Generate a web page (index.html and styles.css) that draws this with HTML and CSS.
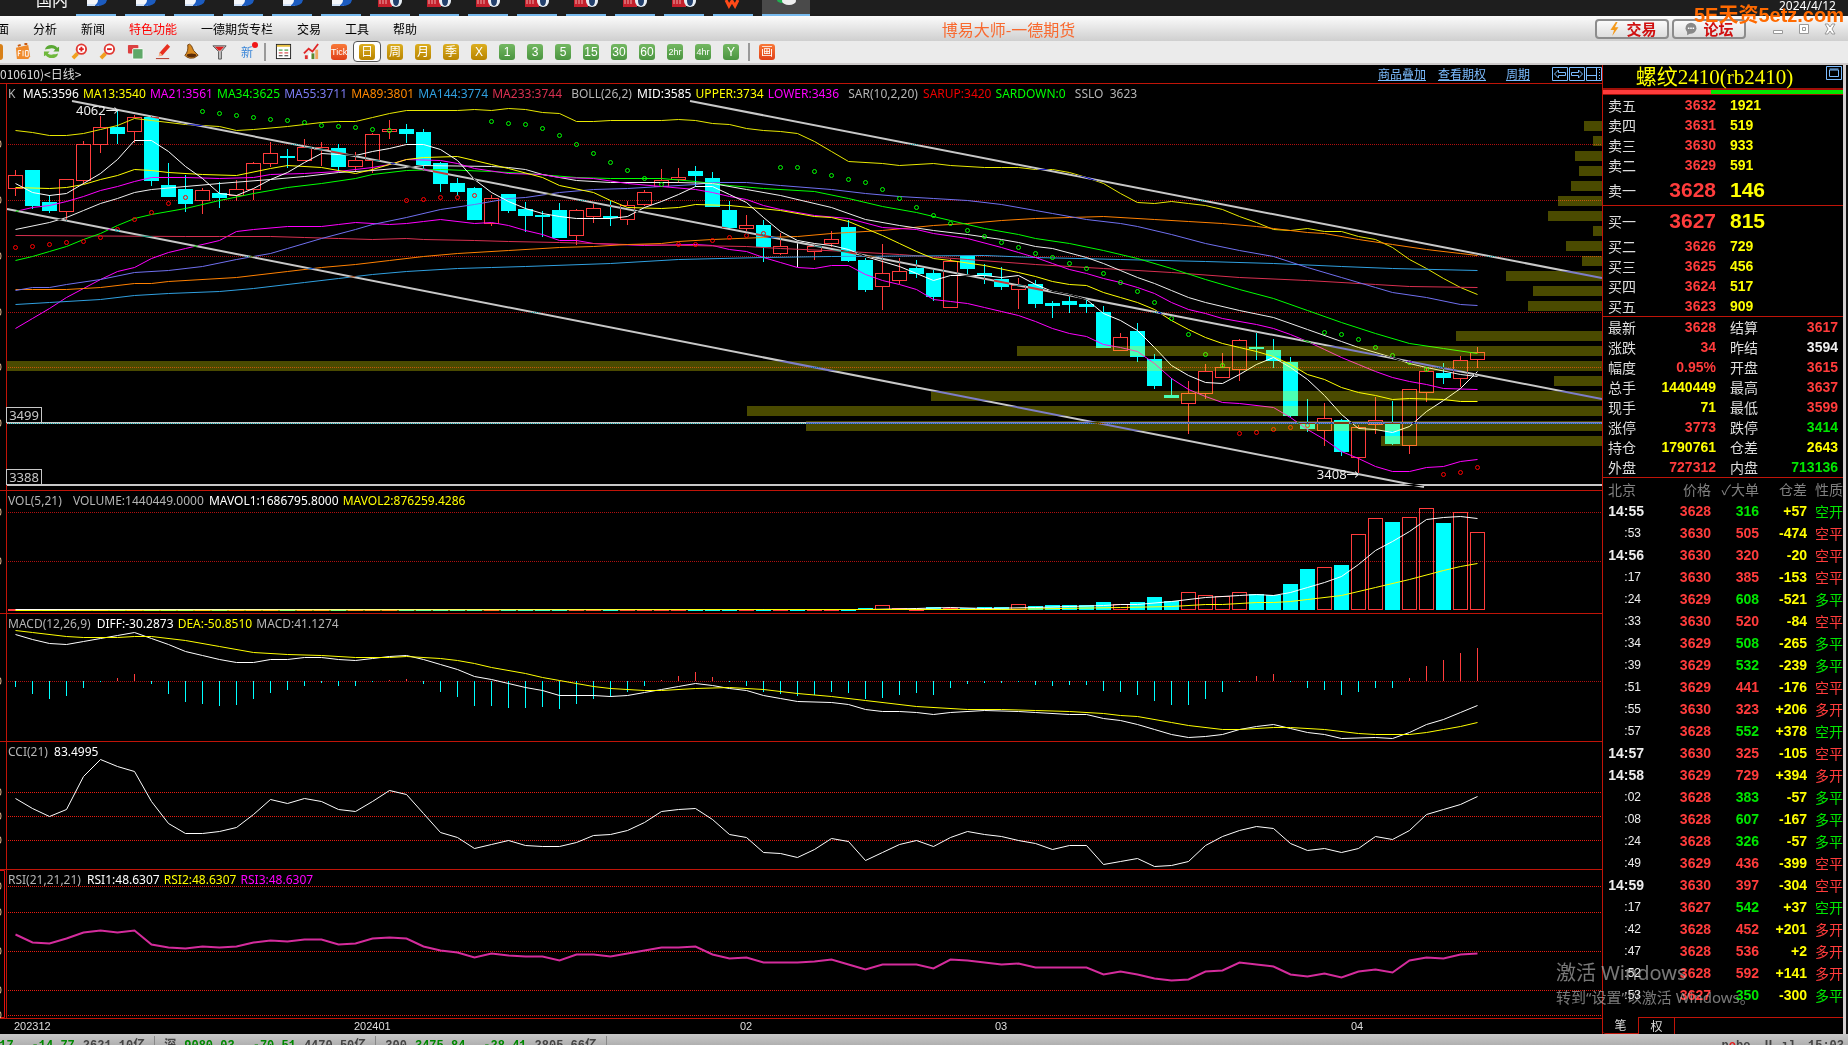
FILE: index.html
```html
<!DOCTYPE html>
<html lang="zh-CN">
<head>
<meta charset="utf-8">
<title>博易大师-一德期货</title>
<link rel="stylesheet" href="styles.css">
</head>
<body>
<svg class="defs" aria-hidden="true">
  <symbol id="t-doc" viewBox="0 0 24 10"><path d="M3 0h12v6H3z" fill="#f4f6fa"/><path d="M14 0h9q-1 6-11 6h-3q5-2 5-6z" fill="#1c5cc0"/><path d="M3 4h8v2H3z" fill="#cfe0f5"/></symbol>
  <symbol id="t-red" viewBox="0 0 24 10"><path d="M0 0h14v7H0z" fill="#c4202c"/><path d="M2 0v4M5 0v4M8 0v4" stroke="#eaa"/><circle cx="18" cy="1" r="6" fill="#e8eef4"/><ellipse cx="18" cy="1" rx="3" ry="5" fill="#23406c"/></symbol>
  <symbol id="t-w" viewBox="0 0 24 10"><path d="M5 0l3 6 3-5 3 5 3-6" fill="none" stroke="#ff4a18" stroke-width="3"/></symbol>
  <symbol id="t-chat" viewBox="0 0 24 10"><ellipse cx="8" cy="0" rx="5" ry="3" fill="#20b050"/><ellipse cx="15" cy="1" rx="7" ry="4" fill="#eee"/></symbol>
</svg>

<header class="taskbar">
  <span class="task-label">国内</span>
  <nav class="tasks" id="tasks"></nav>
  <time class="date">2024/4/12</time>
</header>

<div class="menubar">
  <nav class="menus">
    <a href="#">面</a><a href="#">分析</a><a href="#">新闻</a><a href="#" class="hot">特色功能</a><a href="#">一德期货专栏</a><a href="#">交易</a><a href="#">工具</a><a href="#">帮助</a>
  </nav>
  <h1>博易大师-一德期货</h1>
  <div class="quick">
    <button type="button"><svg viewBox="0 0 12 18"><path d="M8 1L2 10h4l-2 7 7-10H7l3-6z" fill="#f49a1c"/></svg>交易</button>
    <button type="button"><svg viewBox="0 0 18 18"><circle cx="9" cy="8" r="7" fill="#888"/><path d="M4 12v5l5-3z" fill="#888"/><path d="M5 8h2m1 0h2m1 0h2" stroke="#fff" stroke-width="2"/></svg>论坛</button>
  </div>
  <div class="win">
    <button type="button" aria-label="最小化"><svg viewBox="0 0 12 12"><path d="M1.500 7.500h9v3h-9z"/></svg></button>
    <button type="button" aria-label="还原"><svg viewBox="0 0 12 12"><path d="M1.500 1.500h9v9h-9zM4.500 4.500h3v3h-3z"/></svg></button>
    <button type="button" aria-label="关闭"><svg viewBox="0 0 12 12"><path d="M1 1h3l2 3 2-3h3L8 6l3 5H8L6 8l-2 3H1l3-5z"/></svg></button>
  </div>
  <strong class="brand">5E天资5etz.com</strong>
</div>

<div class="toolbar">
  <button type="button" aria-label="报价"><i class="k orange"></i></button>
  <button type="button" aria-label="F10"><svg viewBox="0 0 18 18"><path d="M1 5l13-3 2 12-2 3H2z" fill="#f08a2a"/><path d="M3 3l3-1M10 1l3 0" stroke="#c85a10" stroke-width="2"/><path d="M3.500 14V8h3M3.500 11h2M8.500 8v6M11 8h3v6h-3z" stroke="#fff" fill="none"/></svg></button>
  <button type="button" aria-label="刷新"><svg viewBox="0 0 18 18"><path d="M2 7q1-5 7-5 4 0 6 3l2-1v5h-6l2-2q-3-2-6-1-2 0-5 1z" fill="#5aa834"/><path d="M16 11q-1 5-7 5-4 0-6-3l-2 1V9h6l-2 2q3 2 6 1 2 0 5-1z" fill="#6fb83c"/></svg></button>
  <button type="button" aria-label="放大"><svg viewBox="0 0 18 18"><path d="M7 11l-5 5" stroke="#f0a020" stroke-width="4"/><circle cx="11" cy="6.500" r="5" fill="#fff" stroke="#e03a34" stroke-width="2"/><path d="M8.500 6.500h5M11 4v5" stroke="#e02020" stroke-width="2"/></svg></button>
  <button type="button" aria-label="缩小"><svg viewBox="0 0 18 18"><path d="M7 11l-5 5" stroke="#f0a020" stroke-width="4"/><circle cx="11" cy="6.500" r="5" fill="#fff" stroke="#e03a34" stroke-width="2"/><path d="M8.500 6.500h5" stroke="#e02020" stroke-width="2"/></svg></button>
  <button type="button" aria-label="叠加"><svg viewBox="0 0 18 18"><rect x="1" y="2" width="11" height="9" rx="1" fill="#dc4040"/><rect x="6" y="6" width="11" height="11" rx="1" fill="#5fa868" stroke="#fff"/></svg></button>
  <button type="button" aria-label="画线"><svg viewBox="0 0 18 18"><path d="M13 1l3 3-8 9-4 1 1-4z" fill="#e83020"/><path d="M5 10l3 3-4 1z" fill="#f8c090"/><path d="M1 16.500h14" stroke="#b03020"/></svg></button>
  <button type="button" aria-label="预警"><svg viewBox="0 0 18 18"><path d="M5 2q2-2 4 1 1 5 7 10-4 4-9 3-4-1-5-3 4-4 3-11z" fill="#d88a20" stroke="#704010"/><ellipse cx="9" cy="13" rx="5" ry="2" fill="#5a2c08"/></svg></button>
  <button type="button" aria-label="筛选"><svg viewBox="0 0 18 18"><path d="M2 3h14l-5 6v8H8V9z" fill="#c8c8c8" stroke="#555"/><path d="M4 4h10l-4 4H8z" fill="#e02020"/></svg></button>
  <button type="button" class="new">新</button>
  <span class="sep"></span>
  <button type="button" aria-label="列表"><svg viewBox="0 0 18 18"><rect x="1.500" y="1.500" width="15" height="15" fill="#fff" stroke="#222"/><path d="M2 3h14" stroke="#e8c040" stroke-width="2"/><path d="M4 7.500h4m2 0h4" stroke="#181"/><path d="M4 10.500h4m2 0h4" stroke="#c22"/><path d="M4 13.500h4m2 0h4" stroke="#222"/></svg></button>
  <button type="button" aria-label="走势"><svg viewBox="0 0 18 18"><path d="M1 11l5-5 4 3 6-8" stroke="#e02828" stroke-width="2" fill="none"/><path d="M2 13h3v4H2z" fill="#e03030"/><path d="M6 11h3v6H6z" fill="#fff"/><path d="M9 11h3v6H9z" fill="#5a8a30"/><path d="M13 7h3v10h-3z" fill="#f0a860"/></svg></button>
  <button type="button"><i class="k red">Tick</i></button>
  <button type="button" class="on"><i class="k gold">日</i></button>
  <button type="button"><i class="k gold">周</i></button>
  <button type="button"><i class="k gold">月</i></button>
  <button type="button"><i class="k gold">季</i></button>
  <button type="button"><i class="k gold">X</i></button>
  <button type="button"><i class="k green">1</i></button>
  <button type="button"><i class="k green">3</i></button>
  <button type="button"><i class="k green">5</i></button>
  <button type="button"><i class="k green">15</i></button>
  <button type="button"><i class="k green">30</i></button>
  <button type="button"><i class="k green">60</i></button>
  <button type="button"><i class="k green s">2hr</i></button>
  <button type="button"><i class="k green s">4hr</i></button>
  <button type="button"><i class="k green">Y</i></button>
  <span class="sep"></span>
  <button type="button"><i class="k red b">画</i></button>
</div>

<main class="work">
  <section class="charts">
    <div class="caption">
      <span>010610)&lt;日线&gt;</span>
      <nav><a href="#">商品叠加</a><a href="#">查看期权</a><a href="#">周期</a></nav>
      <div class="arrows">
        <button type="button" aria-label="左移"><svg viewBox="0 0 16 14"><path d="M.5.5h15v13H.5zM2.500 7l4-4v2.500h7v3h-7V11z"/></svg></button>
        <button type="button" aria-label="右移"><svg viewBox="0 0 16 14"><path d="M.5.5h15v13H.5zM13.500 7l-4-4v2.500h-7v3h7V11z"/></svg></button>
        <button type="button" aria-label="边栏"><svg viewBox="0 0 16 14"><path d="M.5.5h15v13H.5zM.5 8.500h10M10.500 1v12M13 2.500h1m-1 3h1m-1 3h1m-1 3h1"/></svg></button>
      </div>
    </div>
    <div class="panels">
      <div class="panel" id="main">
        <p class="legend">K&nbsp; <b class="w">MA5:3596</b> <b class="y">MA13:3540</b> <b class="m">MA21:3561</b> <b class="g">MA34:3625</b> <b class="v">MA55:3711</b> <b class="o">MA89:3801</b> <b class="c">MA144:3774</b> <b class="p">MA233:3744</b> <b class="n">BOLL(26,2)</b> <b class="w">MID:3585</b> <b class="y">UPPER:3734</b> <b class="m">LOWER:3436</b> <b class="n">SAR(10,2,20)</b> <b class="r">SARUP:3420</b> <b class="g">SARDOWN:0</b> <b class="n">SSLO&nbsp; 3623</b></p>
        <span class="tag tag-a">3499</span><span class="tag tag-b">3388</span>
        <span class="mark mark-hi">4062→</span><span class="mark mark-lo">3408→</span>
      </div>
      <div class="panel" id="vol"><p class="legend"><b>VOL(5,21)</b> <b class="n">VOLUME:1440449.0000</b> <b class="w">MAVOL1:1686795.8000</b> <b class="y">MAVOL2:876259.4286</b></p></div>
      <div class="panel" id="macd"><p class="legend"><b>MACD(12,26,9)</b> <b class="w">DIFF:-30.2873</b> <b class="y">DEA:-50.8510</b> <b>MACD:41.1274</b></p></div>
      <div class="panel bright" id="cci"><p class="legend"><b>CCI(21)</b> <b class="w">83.4995</b></p></div>
      <div class="panel bright" id="rsi"><p class="legend"><b>RSI(21,21,21)</b> <b class="w">RSI1:48.6307</b> <b class="y">RSI2:48.6307</b> <b class="m">RSI3:48.6307</b></p></div>
    </div>
    <div class="months"><span>202312</span><span>202401</span><span>02</span><span>03</span><span>04</span></div>
  </section>

  <aside class="quote">
    <div class="symbol"><h2>螺纹2410(rb2410)</h2><button type="button" aria-label="最大化"><svg viewBox="0 0 16 14"><path d="M.5.5h15v13H.5zM3.500 4h9v6.500h-9zM3.500 3h9"/></svg></button></div>
    <div class="ratio"></div>
    <table class="depth" id="asks"></table>
    <table class="depth" id="bids"></table>
    <table class="stats" id="stats"></table>
    <table class="ticks" id="ticks"></table>
    <div class="tabs"><button type="button" class="cur">笔</button><button type="button">权</button></div>
  </aside>
  <div class="watermark"><b>激活 Windows</b><span>转到“设置”以激活 Windows。</span></div>
</main>

<footer class="status">
  <div class="idx"><span class="g">.17</span><span class="g">-14.77</span><span>2621.10亿</span></div>
  <div class="idx"><span>深</span><span class="g">9080.03</span><span class="g">-70.51</span><span>4470.50亿</span></div>
  <div class="idx"><span>300</span><span class="g">3475.84</span><span class="g">-28.41</span><span>2805.66亿</span></div>
  <div class="tray"><span>p<em>o</em>bo</span><span>Ⅱ.ıl</span><span>15:03</span></div>
</footer>
<script src="app.js"></script>
</body>
</html>
```

FILE: styles.css
```css
* { box-sizing: border-box; }
body {
  margin: 0; height: 100vh; display: flex; flex-direction: column; overflow: hidden;
  background: #000; color: #ddd;
  font: 12px/16px "Noto Sans", "Noto Sans CJK SC", sans-serif;
}
button { margin: 0; padding: 0; border: 0; background: none; font: inherit; color: inherit; }
h1, h2, p { margin: 0; font-weight: normal; }
a { color: inherit; text-decoration: none; }
i, em { font-style: normal; }
svg { display: block; }
.defs { position: absolute; width: 0; height: 0; }

.taskbar { flex: 0 0 16px; display: flex; background: #1e1e1e; overflow: hidden; color: #fff; }
.task-label { width: 76px; padding-left: 36px; line-height: 1px; font-size: 16px; white-space: nowrap; }
.tasks { flex: 1; display: flex; gap: 9px; }
.tasks span { width: 40px; height: 16px; border-bottom: 2px solid #76b9ed; display: flex; justify-content: center; }
.tasks span.act { width: 48px; margin-right: -8px; background: #4a4a4a; }
.tasks svg { width: 24px; height: 10px; }
.date { width: 69px; line-height: 12px; }

.menubar {
  flex: 0 0 25px; display: grid; grid-template-columns: 584fr auto 416fr 102px; align-items: center; position: relative;
  background: linear-gradient(#fbfbfb, #cfcfcf); color: #000;
}
.menus { display: flex; gap: 24px; margin-left: -3px; white-space: nowrap; font-family: "Noto Sans CJK SC", sans-serif; }
.menus .hot { color: #f00; }
h1 { font: 16px/24px "Noto Sans CJK SC", sans-serif; color: #f86a30; }
.quick { display: flex; justify-content: flex-end; gap: 3px; }
.quick button {
  width: 74px; height: 20px; border: 2px solid #8c8c8c; border-radius: 4px; background: linear-gradient(#fafafa, #ddd);
  display: flex; align-items: center; justify-content: center; gap: 5px;
  font: bold 15px/16px "Noto Sans CJK SC", sans-serif; color: #d01010;
}
.quick svg { height: 16px; width: 14px; }
.win { display: flex; justify-content: flex-end; gap: 14px; padding-right: 12px; }
.win svg { width: 12px; height: 12px; fill: #fff; stroke: #999; }
.brand {
  position: absolute; right: 4px; top: -13px; color: #ff6a00;
  font: bold 20px/24px "Liberation Sans", "Noto Sans CJK SC", sans-serif;
}

.toolbar {
  flex: 0 0 24px; display: flex; align-items: center; overflow: hidden;
  background: #ebebeb; border-bottom: 2px solid #cdc9c9; padding-bottom: 1px;
}
.toolbar button { flex: 0 0 28px; height: 21px; display: flex; align-items: center; justify-content: center; }
.toolbar button:first-child { margin-left: -19px; }
.toolbar svg { width: 17px; height: 17px; }
.toolbar .on { border: 1px solid #555; border-radius: 4px; background: #fff; }
.toolbar .new { position: relative; font: 12px/16px "Noto Sans CJK SC", sans-serif; color: #3a86d8; }
.toolbar .new::after { content: ""; position: absolute; right: 3px; top: 1px; width: 6px; height: 6px; border-radius: 3px; background: #f01818; }
.sep { flex: 0 0 2px; height: 18px; margin: 0 3px; background: #999; }
.k {
  width: 16px; height: 16px; border-radius: 3px; color: #fff; text-align: center; overflow: hidden;
  font: 12px/16px "Liberation Sans", "Noto Sans CJK SC", sans-serif;
}
.k.s { font-size: 9px; }
.gold { background: linear-gradient(#dcae20, #b88400); }
.green { background: linear-gradient(#74b862, #4a9440); }
.red { background: linear-gradient(#f87838, #e04018); font-size: 9px; }
.red.b { font-size: 12px; }
.orange { background: #d88018; }

.work { flex: 1; min-height: 0; display: grid; grid-template-columns: minmax(0, 1fr) 241px 5px; position: relative; background: linear-gradient(90deg, #000 99%, #d4d0d0 99%, #d4d0d0 calc(100% - 2px), #111 calc(100% - 2px)); }
.charts { display: flex; flex-direction: column; min-width: 0; background: #000; }
.caption { flex: 0 0 18px; display: flex; align-items: center; }
.caption > span { flex: 1; font-family: "Noto Sans CJK SC", sans-serif; }
.caption nav { display: flex; gap: 12px; color: #7cbcff; font-family: "Noto Sans CJK SC", sans-serif; }
.caption nav a { text-decoration: underline; }
.caption nav a:last-child { margin-left: 8px; }
.arrows { display: flex; gap: 1px; margin-left: 22px; }
.arrows svg, .symbol svg { width: 16px; height: 14px; fill: none; stroke: #7cbcff; }
.panels { flex: 1; min-height: 0; display: grid; grid-template-rows: minmax(0, 407fr) minmax(0, 123fr) minmax(0, 128fr) minmax(0, 128fr) minmax(0, 149fr); }
.panel { position: relative; border-top: 1px solid #c01408; }
.panel > svg { position: absolute; inset: 0; width: 100%; height: 100%; }
.legend { position: relative; z-index: 1; padding-left: 8px; line-height: 20px; white-space: nowrap; color: #b4b4b4; }
.legend b { font-weight: normal; margin-left: 1px; }
.legend b:first-child:not([class]) { margin: 0 2px 0 0; }
.legend .n { margin-left: 6px; margin-right: 1px; }
.w { color: #fff; } .y { color: #ff0; } .m { color: #f0f; } .g { color: #0f0; } .v { color: #7c7cf4; }
.o { color: #f80; } .c { color: #30a0e0; } .p { color: #d83050; } .r { color: #e00; }
.tag { position: absolute; left: 6px; width: 36px; height: 16px; border: 1px solid #c8c8c8; background: #000; color: #c8c8c8; font-size: 13px; line-height: 15px; text-align: center; }
.tag-a { bottom: 16.500%; } .tag-b { bottom: 1.300%; }
.mark { position: absolute; color: #eee; font-size: 13px; line-height: 16px; }
.mark-hi { left: 76px; top: 4.500%; } .mark-lo { left: 82.200%; bottom: 2%; }
.months { flex: 0 0 16px; display: grid; grid-template-columns: 340fr 386fr 255fr 356fr 251fr; padding-left: 14px; border-top: 1px solid #c01408; font: 11px/15px "Liberation Sans", sans-serif; }

.grid { stroke: #b01010; stroke-dasharray: 1 1; }
.bright .grid { stroke: #e81c10; }
.line { fill: none; stroke-width: 1; }
#rsi .line { stroke-width: 2; }
.trend { stroke: #c8c8c8; stroke-width: 2; mix-blend-mode: difference; }
.profile { fill: #ff0; opacity: .29; }

.quote { border-left: 1px solid #c01408; background: #000; display: flex; flex-direction: column; min-width: 0; }
.symbol { height: 24px; display: flex; align-items: center; justify-content: flex-end; border-bottom: 1px solid #a01008; }
h2 { flex: 1; text-align: center; color: #ff0; font: 21px/22px "Liberation Serif", "Noto Sans CJK SC", serif; }
.symbol button { align-self: flex-start; margin: 1px 1px 0 0; }
.ratio { height: 6px; border: solid #a01008; border-width: 1px 0; background: linear-gradient(90deg, #ff3c3c 45%, #00e600 45%); }
table { border-collapse: collapse; table-layout: fixed; width: 100%; font: bold 14px/20px "Liberation Sans", "Noto Sans CJK SC", sans-serif; }
td, th { padding: 0; height: 20px; white-space: nowrap; }
th { text-align: left; font: 14px/20px "Noto Sans CJK SC", sans-serif; color: #ddd; }
td { text-align: right; }
.depth th, .stats th { padding-left: 5px; }
.depth th:first-child, .stats th:first-child { width: 49px; }
.depth .price, .stats .v1 { width: 64px; }
.depth .size { text-align: left; padding-left: 14px; color: #ff0; }
.depth .best td { font-size: 21px; height: 30px; }
.up { color: #ff3c3c; } .dn { color: #00e600; } .ye { color: #ff0; } .wh { color: #eee; }
#bids { border-top: 1px solid #c01408; border-bottom: 1px solid #c01408; }
#stats { border-bottom: 1px solid #c01408; }
.stats .l2 { width: 50px; padding-left: 14px; }
.stats .v2 { padding-right: 5px; }
.ticks { line-height: 22px; }
.ticks td, .ticks th { height: 22px; text-align: right; }
.ticks th { color: #808080; }
.ticks .time { width: 41px; color: #eee; }
.ticks th.time { color: #808080; text-align: left; padding-left: 5px; }
.ticks .sub { font-weight: normal; font-size: 12px; padding-right: 3px; }
.ticks .pr { width: 67px; } .ticks .vo { width: 48px; } .ticks .df { width: 48px; }
.ticks .ki { font-weight: normal; font-family: "Noto Sans CJK SC", sans-serif; }
.tabs { margin-top: auto; height: 17px; display: flex; border-top: 1px solid #c01408; font: 12px/14px "Noto Sans CJK SC", sans-serif; }
.tabs button { width: 36px; border-right: 1px solid #c01408; }
.tabs .cur { margin-top: -1px; background: #000; border-bottom: 1px solid #c01408; border-radius: 0 0 0 3px; }

.watermark { position: absolute; right: 70px; bottom: 26px; width: 222px; color: rgba(200, 200, 200, .6); font-family: "Noto Sans", "Noto Sans CJK SC", sans-serif; white-space: nowrap; display: flex; flex-direction: column; }
.watermark b { font-size: 20px; line-height: 26px; font-weight: normal; }
.watermark span { font-size: 15px; line-height: 22px; }

.status { flex: 0 0 11px; display: flex; overflow: hidden; background: linear-gradient(#c8c8c8, #b0b0b0); color: #444; font: bold 12px/20px "Liberation Mono", "Noto Sans CJK SC", monospace; padding-top: 2px; }
.status .g { color: #080; }
.idx { display: flex; gap: 8px; padding-right: 9px; margin-right: 9px; border-right: 1px solid #888; height: 20px; }
.idx:first-child { margin-left: -8px; }
.idx span:nth-last-child(2) { margin-left: 10px; }
.tray { margin-left: auto; display: flex; gap: 12px; padding-right: 4px; }
.tray em { color: #e02020; }
```

FILE: app.js
```js
// Bars are 17 units apart; series values run downward, three to a unit.
const X = i => 15.5 + 17 * i;
const W = 1602;
const RED = '#ff3c3c', CYAN = '#00ffff';

function svg(id, top, height, body) {
  document.getElementById(id).insertAdjacentHTML('afterbegin',
    `<svg viewBox="0 ${top} ${W} ${height}" preserveAspectRatio="none">${body}<path d="M6.5 ${top}v${height}" stroke="#c01408"/></svg>`);
}
const pairs = s => s.split(',').map(p => p.trim().split(' ').map(Number));
const line = (s, base, color) =>
  `<polyline class="line" stroke="${color}" points="${pairs(s).map(([i, v]) => X(i) + ',' + (Math.round(base + v / 3) + 0.5)).join(' ')}"/>`;
const grid = ys => ys.map(y => `<path class="grid" d="M8 ${y}.5H${W}"/><ellipse cx="-1" cy="${y}" rx="2" ry="4" fill="none" stroke="#e0b890"/>`).join('');
const box = (i, top, bottom, up) => up
  ? `<rect x="${X(i) - 7}" y="${top + 0.5}" width="14" height="${Math.max(1, bottom - top)}" fill="none" stroke="${RED}"/>`
  : `<rect x="${X(i) - 7.5}" y="${top}" width="15" height="${Math.max(2, bottom - top)}" fill="${CYAN}"/>`;

// Direction, high, body top, body bottom, low
const candles = `r 240 256 295 318;c 240 240 347 356;c 316 336 362 369;r 268 268 364 395;r 153 163 271 283;r 78 112 163 189;c 62 111 131 162;r 76 82 124 158;c 76 82 272 288;c 219 285 320 320;c 255 297 341 366;r 293 300 331 372;c 277 309 323 354;r 270 298 316 333;r 216 220 298 330;r 155 190 220 230;c 177 198 203 234;r 147 170 211 214;r 155 172 177 228;c 162 174 230 245;r 186 211 229 245;r 128 133 211 248;r 90 118 122 147;c 102 117 131 159;c 117 126 226 242;c 215 219 281 306;c 264 279 305 318;c 291 294 389 389;r 316 325 400 408;c 312 312 362 369;c 336 357 377 425;c 363 375 380 441;c 339 360 443 443;r 357 361 436 464;r 342 355 377 399;c 333 378 384 408;r 333 346 388 404;r 300 307 341 347;r 237 271 287 287;r 234 262 266 278;c 228 243 257 290;c 246 264 350 350;c 333 360 413 413;r 375 406 415 423;c 390 405 470 516;r 430 469 488 495;w 458 458 532 532;r 462 469 482 509;r 424 448 458 472;c 390 411 512 515;c 505 510 599 606;r 462 550 589 660;r 504 544 571 583;c 510 534 551 564;c 540 549 620 632;r 508 514 650 650;c 497 497 536 551;c 522 549 557 581;c 531 567 590 600;r 564 584 596 657;c 571 582 641 654;c 633 639 647 684;c 613 633 644 669;c 628 642 650 669;c 648 666 773 773;r 729 742 781 781;c 699 723 800 816;c 792 807 887 896;c 865 915 923 923;r 873 910 940 1031;r 822 844 910 926;r 789 832 862 862;r 747 751 838 873;c 727 771 776 810;c 747 780 812 834;c 801 816 978 980;c 927 1000 1017 1026;r 939 985 1021 1068;c 987 990 1085 1098;r 1005 1012 1102 1155;r 921 991 1003 1031;c 933 1000 1061 1064;r 898 898 1066 1092;r 835 844 905 936;c 819 849 863 881;r 798 811 865 891;r 771 787 808 835`
  .split(';').map(s => { const [d, ...v] = s.split(' '); return [d, ...v.map(n => Math.round(90 + n / 3))]; });

let main = grid([144, 200, 256, 312, 367, 423]);
candles.forEach(([d, hi, top, bot, lo], i) => {
  if (d === 'w') { main += `<path d="M${X(i)} ${hi}V${lo}" stroke="#fff"/>`; return; }
  main += `<path d="M${X(i)} ${hi}V${top}M${X(i)} ${bot}V${lo}" stroke="${d === 'r' ? RED : CYAN}"/>` + box(i, top, bot, d === 'r');
});
[
  ['#e8e800', '0 121,1 127,2 135,3 135,4 130,5 118,6 106,7 83,8 90,10 103,12 109,13 121,14 118,16 109,18 95,19 92,20 92,21 82,22 70,23 61,26 61,27 58,28 60,29 55,30 58,31 67,32 70,33 94,34 94,35 91,38 91,39 88,40 91,41 100,42 103,43 115,44 121,45 124,46 130,47 154,48 184,49 214,51 220,52 226,54 220,55 226,57 232,58 230,59 232,60 238,61 238,62 247,63 262,64 280,65 308,66 337,67 340,68 334,69 340,70 346,71 358,72 377,73 395,74 418,75 421,76 415,77 424,78 424,79 439,80 448,81 472,82 508,83 535,84 563,85 592,86 611'],
  ['#ff00ff', '0 715,1 683,2 655,3 622,4 595,5 566,6 544,7 532,8 505,9 487,10 475,12 451,13 424,14 418,16 409,18 407,19 403,20 397,22 403,23 398,24 392,25 388,27 400,28 395,29 404,30 421,31 431,32 451,33 451,34 458,37 466,40 461,41 466,42 478,43 484,44 502,45 517,46 532,47 535,48 526,49 526,50 551,51 569,52 583,53 598,54 626,55 632,56 640,57 652,58 664,59 676,60 694,61 713,62 728,63 737,64 761,65 770,66 782,67 820,68 865,69 898,70 919,71 937,72 940,74 950,75 982,76 1018,77 1046,78 1082,79 1105,80 1127,81 1144,82 1142,83 1132,84 1127,85 1114,86 1108'],
  ['#d83050', '0 436,10 437,12 439,15 439,17 442,19 443,21 446,23 445,24 448,27 451,29 454,32 457,36 463,43 467,45 475,49 482,52 491,56 506,60 522,64 533,68 546,72 560,76 571,80 582,82 588,86 592'],
  ['#30a0e0', '0 643,2 637,5 628,7 616,9 610,12 604,14 595,17 577,19 565,21 553,23 544,26 535,28 530,30 527,35 520,39 508,44 502,48 497,57 496,60 500,65 508,70 514,74 520,78 528,81 535,86 541'],
  ['#ff8000', '0 598,1 596,3 596,5 590,7 580,8 580,9 574,13 562,16 544,18 532,20 523,22 511,24 499,26 490,29 481,32 472,34 467,36 462,38 458,39 452,41 446,44 441,46 437,48 430,49 427,51 419,54 404,56 398,58 390,60 383,62 380,64 379,67 386,69 394,71 400,73 409,74 413,76 425,77 430,79 448,81 463,83 478,85 490,86 496'],
  ['#7070f0', '0 601,1 592,2 590,3 583,5 566,7 547,9 541,11 527,13 508,15 488,16 475,18 445,20 418,21 403,23 380,25 358,27 341,29 325,30 321,32 307,34 298,36 294,38 287,40 281,41 277,43 277,45 286,48 298,50 309,52 317,54 325,56 331,58 343,60 360,61 370,63 386,65 400,66 409,68 433,70 458,72 480,74 499,76 531,78 562,80 590,81 605,83 622,85 641,86 646'],
  ['#00ff00', '0 511,1 499,2 484,3 469,4 448,5 428,6 406,7 385,8 371,10 353,12 331,14 310,16 292,18 278,20 265,21 253,23 241,25 238,28 242,30 249,33 260,35 263,38 264,40 274,42 286,44 293,47 304,49 323,51 347,53 366,55 390,57 415,59 433,60 445,62 459,64 481,66 503,68 535,70 567,72 597,74 625,76 661,78 697,80 729,82 760,84 775,86 789'],
  ['#eeeeee', '0 418,2 395,3 380,4 361,5 340,6 325,7 307,8 298,10 289,12 280,15 266,17 257,19 247,21 241,23 231,24 226,28 228,29 232,30 238,31 252,33 271,35 277,39 275,41 280,43 296,45 316,48 352,50 386,52 406,54 421,56 433,58 448,59 457,60 467,61 475,63 502,64 520,65 539,66 560,67 580,68 599,69 620,70 635,72 659,74 682,76 716,78 753,79 772,81 802,82 820,83 832,85 851,86 857'],
  ['#ff00ff', '0 364,1 352,2 346,3 334,4 319,5 301,6 289,7 274,8 262,10 262,12 265,14 261,15 253,17 249,19 242,21 232,22 222,23 208,25 211,26 220,27 235,29 250,31 253,32 262,34 265,36 280,38 287,40 296,41 306,42 318,43 328,44 346,45 358,47 376,49 385,51 410,53 418,54 430,56 444,58 471,59 485,60 500,61 519,62 537,63 548,64 563,65 577,66 590,67 610,68 635,69 656,70 670,71 683,73 702,74 714,75 733,76 753,77 778,78 802,79 823,80 842,81 862,82 874,83 882,84 895,86 898'],
  ['#ffff00', '0 292,2 295,3 292,4 282,5 268,6 256,7 238,8 241,9 247,11 252,13 256,15 234,16 226,18 232,19 240,20 249,21 238,22 222,23 207,24 202,26 199,27 211,28 222,29 234,31 262,32 284,34 307,35 330,36 350,38 355,39 350,40 341,42 346,45 359,47 377,48 380,49 392,50 413,51 436,52 460,53 482,54 503,55 511,57 526,59 545,60 557,61 572,62 582,63 586,64 605,65 620,66 637,67 658,68 689,69 718,70 740,71 760,72 770,73 782,74 797,75 822,76 851,77 866,78 892,79 907,80 916,81 928,82 925,84 928,85 934,86 934'],
  ['#ffffff', '0 280,1 305,2 316,3 310,4 280,5 250,6 207,7 151,8 151,9 182,10 228,11 264,12 309,13 316,14 295,15 268,16 247,17 217,18 190,19 192,20 195,21 184,22 173,23 163,24 163,25 178,26 211,27 268,28 306,29 333,30 354,31 369,32 378,33 384,35 384,36 379,37 351,38 334,39 313,40 289,41 289,42 311,43 337,44 380,45 424,46 449,47 460,48 465,49 476,50 499,51 512,52 527,53 548,54 571,55 556,57 556,58 562,59 556,60 583,61 602,62 612,63 628,64 668,65 691,66 720,67 772,68 824,69 854,70 875,71 880,72 852,73 823,74 802,75 830,76 866,77 915,78 973,79 1014,80 1018,81 1027,82 1009,83 962,84 931,85 893,86 844']
].forEach(([c, s]) => main += line(s, 90, c));

const dots = (s, c) => pairs(s).map(([i, v]) => `<circle cx="${X(i)}" cy="${Math.round(90 + v / 3) + 0.5}" r="2" fill="none" stroke="${c}"/>`).join('');
main += dots('11 62,12 68,13 74,14 80,15 86,16 91,17 97,18 104,19 107,20 112,21 118,22 121,28 92,29 98,30 103,31 115,32 136,33 161,34 190,35 217,36 241,37 265,38 282,45 230,46 232,47 244,48 256,49 268,50 277,51 298,52 325,53 352,54 376,55 400,56 421,57 439,58 457,59 472,60 488,61 502,62 520,63 535,64 550,65 577,66 604,67 637,68 685,69 733,70 793,71 824,77 727,78 733,79 748,80 772,81 796,82 817,83 838', '#00ff00');
main += dots('0 472,1 469,2 463,3 457,4 452,5 440,6 418,7 388,8 365,9 340,10 320,23 331,24 328,25 322,26 320,27 316,39 463,40 461,41 451,42 442,43 434,44 428,72 1030,73 1027,74 1018,75 1012,76 1006,84 1153,85 1147,86 1132', '#ff0000');
// Volume by price
[[121, 1584], [136, 1593], [151, 1575], [166, 1579], [181, 1571], [196, 1558], [211, 1548], [226, 1593], [241, 1566], [256, 1582], [271, 1506], [286, 1533], [301, 1528], [331, 1456], [346, 1017], [361, 7], [376, 1554], [391, 931], [406, 747], [421, 806], [436, 1381]]
  .forEach(([y, x]) => main += `<rect class="profile" x="${x}" y="${y}" width="${W - x}" height="10"/>`);
['M72 101L1602 399', 'M690 101L1602 278', 'M7 209L1424 487', 'M7 423H1602', 'M7 485H1602']
  .forEach(d => main += `<path class="trend" d="${d}"/>`);
svg('main', 84, 406, main);

let vol = grid([512, 561]);
const volume = [383, 376, 385, 386, 381, 383, 385, 380, 381, 373, 377, 375, 375, 375, 366, 373, 366, 351, 363, 337, 346, 349, 337, 343, 345, 312, 267, 262, 255, 163, 115, 126, 112, 85, 129, 97, 157];
const volDir = 'crrrcrcccrcccccrcccrrrrcccc' + 'rcrrcrrcrr';
for (let i = 0; i < 87; i++) {
  const v = i < 50 ? 387 : volume[i - 50];
  const up = i < 50 ? candles[i][0] === 'r' : volDir[i - 50] === 'r';
  vol += box(i, Math.round(480 + v / 3), up ? 609 : 610, up);
}
vol += line('0 388,44 388,50 386,53 384,55 382,57 385,60 382,62 379,64 376,65 373,66 372,68 363,70 352,72 346,73 343,74 346,75 337,76 322,77 307,78 289,79 253,80 211,81 184,82 154,83 118,84 112,85 109,86 115', 480, '#fff');
vol += line('0 390,44 388,58 386,65 382,68 379,70 373,71 373,73 367,74 367,75 364,76 358,78 346,80 322,82 298,84 271,85 259,86 250', 480, '#ff0');
svg('vol', 491, 122, vol);

let macd = grid([681]);
[621, 642, 657, 648, 624, 605, 594, 582, 612, 642, 666, 672, 678, 675, 657, 639, 630, 618, 609, 618, 618, 607, 600, 597, 612, 636, 651, 678, 678, 684, 684, 681, 687, 672, 657, 651, 636, 618, 600, 588, 576, 591, 606, 618, 636, 642, 648, 645, 636, 639, 657, 654, 645, 639, 645, 624, 612, 609, 609, 606, 615, 618, 615, 615, 633, 636, 645, 663, 675, 675, 657, 636, 606, 588, 582, 606, 624, 630, 645, 636, 624, 624, 594, 558, 540, 519, 504]
  .forEach((v, i) => macd += `<path d="M${X(i)} 681V${Math.round(480 + v / 3)}" stroke="${v < 604 ? RED : CYAN}"/>`);
macd += line('0 463,1 478,2 490,3 493,4 484,5 473,6 466,7 457,8 475,9 493,10 514,11 526,12 538,13 547,14 545,15 538,16 538,17 532,18 532,19 538,20 541,21 535,22 529,23 526,24 538,25 553,26 568,27 589,28 598,29 610,30 622,31 631,32 646,34 646,35 649,36 646,37 637,38 628,39 619,40 610,41 616,42 625,43 631,44 646,45 655,46 664,48 667,49 673,50 688,51 694,52 694,53 697,54 703,55 697,57 691,59 692,60 697,62 703,63 703,64 715,65 721,66 733,67 748,68 763,69 772,70 769,71 763,72 748,73 739,74 733,75 745,76 757,77 763,78 775,80 772,81 775,82 757,83 733,84 718,85 697,86 676', 480, '#fff');
macd += line('0 451,1 457,3 469,4 472,6 472,7 469,8 469,10 481,12 499,14 517,16 522,18 526,20 532,22 532,23 529,25 535,26 541,27 550,28 562,30 580,31 592,32 601,33 610,34 619,35 625,37 631,38 631,40 625,42 622,44 628,46 640,48 649,50 661,53 679,56 688,58 688,60 691,62 694,64 700,65 706,66 709,68 727,69 736,71 748,72 748,74 742,75 742,77 748,79 760,80 763,82 763,83 757,84 748,85 739,86 727', 480, '#ff0');
svg('macd', 614, 127, macd);

svg('cci', 742, 127, grid([792, 816, 840]) + line('0 175,1 203,2 229,3 208,4 109,5 58,6 79,7 94,8 184,9 250,10 280,11 280,12 274,13 260,14 223,15 178,16 190,17 175,18 184,19 208,20 214,21 182,22 151,23 163,24 219,25 277,26 292,27 325,28 313,29 301,30 316,31 319,32 319,33 307,34 286,35 283,36 271,37 247,38 214,39 208,40 205,41 237,42 283,43 292,44 337,45 340,46 352,47 328,48 295,49 304,50 361,51 335,52 313,53 301,54 319,55 292,56 274,57 283,58 289,59 301,60 310,61 328,62 316,63 316,64 373,65 364,66 355,67 379,68 376,69 364,70 316,71 289,72 271,73 259,74 265,75 310,76 331,77 325,78 337,79 325,80 289,81 298,82 271,83 223,84 208,85 193,86 169', 740, '#fff'));
svg('rsi', 870, 148, '<path d="M0 870.5H4.500V1017.500H0" fill="none" stroke="#e01010"/>' + grid([886, 912, 951, 990, 1015]) + line('0 583,1 607,2 610,3 595,4 577,5 571,6 577,7 571,8 613,9 622,10 625,11 619,12 622,13 619,14 607,15 601,16 604,17 598,18 598,19 613,20 610,21 595,22 592,23 595,24 619,25 631,26 637,27 652,28 640,29 646,30 649,31 649,32 661,33 643,34 643,35 649,36 640,37 631,38 622,39 622,40 619,41 643,42 655,43 652,44 667,46 667,47 664,48 658,49 673,50 688,51 673,53 673,54 685,55 658,56 661,57 667,58 673,59 670,60 682,63 682,64 703,65 694,66 703,67 715,68 721,69 718,70 694,71 691,72 667,73 673,74 679,75 703,76 709,77 700,78 712,79 694,80 688,81 697,82 661,83 652,84 655,85 643,86 640', 740, '#d42c9c'));

document.getElementById('tasks').innerHTML =
  [...'ddddddrrrrrrrwc'].map(k => `<span${k === 'c' ? ' class="act"' : ''}><svg><use href="#t-${{ d: 'doc', r: 'red', w: 'w', c: 'chat' }[k]}"/></svg></span>`).join('');

const depth = (id, rows) => document.getElementById(id).innerHTML = rows.map(([l, p, s]) =>
  `<tr${l.endsWith('一') ? ' class="best"' : ''}><th scope="row">${l}</th><td class="price up">${p}</td><td class="size">${s}</td></tr>`).join('');
depth('asks', [['卖五', 3632, 1921], ['卖四', 3631, 519], ['卖三', 3630, 933], ['卖二', 3629, 591], ['卖一', 3628, 146]]);
depth('bids', [['买一', 3627, 815], ['买二', 3626, 729], ['买三', 3625, 456], ['买四', 3624, 517], ['买五', 3623, 909]]);

document.getElementById('stats').innerHTML = [
  ['最新', '3628', 'up', '结算', '3617', 'up'], ['涨跌', '34', 'up', '昨结', '3594', 'wh'],
  ['幅度', '0.95%', 'up', '开盘', '3615', 'up'], ['总手', '1440449', 'ye', '最高', '3637', 'up'],
  ['现手', '71', 'ye', '最低', '3599', 'up'], ['涨停', '3773', 'up', '跌停', '3414', 'dn'],
  ['持仓', '1790761', 'ye', '仓差', '2643', 'ye'], ['外盘', '727312', 'up', '内盘', '713136', 'dn']
].map(([a, b, c, d, e, f]) => `<tr><th scope="row">${a}</th><td class="v1 ${c}">${b}</td><th scope="row" class="l2">${d}</th><td class="v2 ${f}">${e}</td></tr>`).join('');

document.getElementById('ticks').innerHTML =
  '<tr><th class="time">北京</th><th class="pr">价格</th><th class="vo">✓大单</th><th class="df">仓差</th><th>性质</th></tr>' +
  `14:55 3628 316 +57 空开 d|:53 3630 505 -474 空平 u|14:56 3630 320 -20 空平 u|:17 3630 385 -153 空平 u|:24 3629 608 -521 多平 d|:33 3630 520 -84 空平 u|:34 3629 508 -265 多平 d|:39 3629 532 -239 多平 d|:51 3629 441 -176 空平 u|:55 3630 323 +206 多开 u|:57 3628 552 +378 空开 d|14:57 3630 325 -105 空平 u|14:58 3629 729 +394 多开 u|:02 3628 383 -57 多平 d|:08 3628 607 -167 多平 d|:24 3628 326 -57 多平 d|:49 3629 436 -399 空平 u|14:59 3630 397 -304 空平 u|:17 3627 542 +37 空开 d|:42 3628 452 +201 多开 u|:47 3628 536 +2 多开 u|:52 3628 592 +141 多开 u|:53 3627 350 -300 多平 d`
    .split('|').map(r => {
      const [t, p, v, d, k, s] = r.split(' '), c = s === 'u' ? 'up' : 'dn';
      return `<tr><td class="time${t[0] === ':' ? ' sub' : ''}">${t}</td><td class="up">${p}</td><td class="${c}">${v}</td><td class="ye">${d}</td><td class="ki ${c}">${k}</td></tr>`;
    }).join('');
```
